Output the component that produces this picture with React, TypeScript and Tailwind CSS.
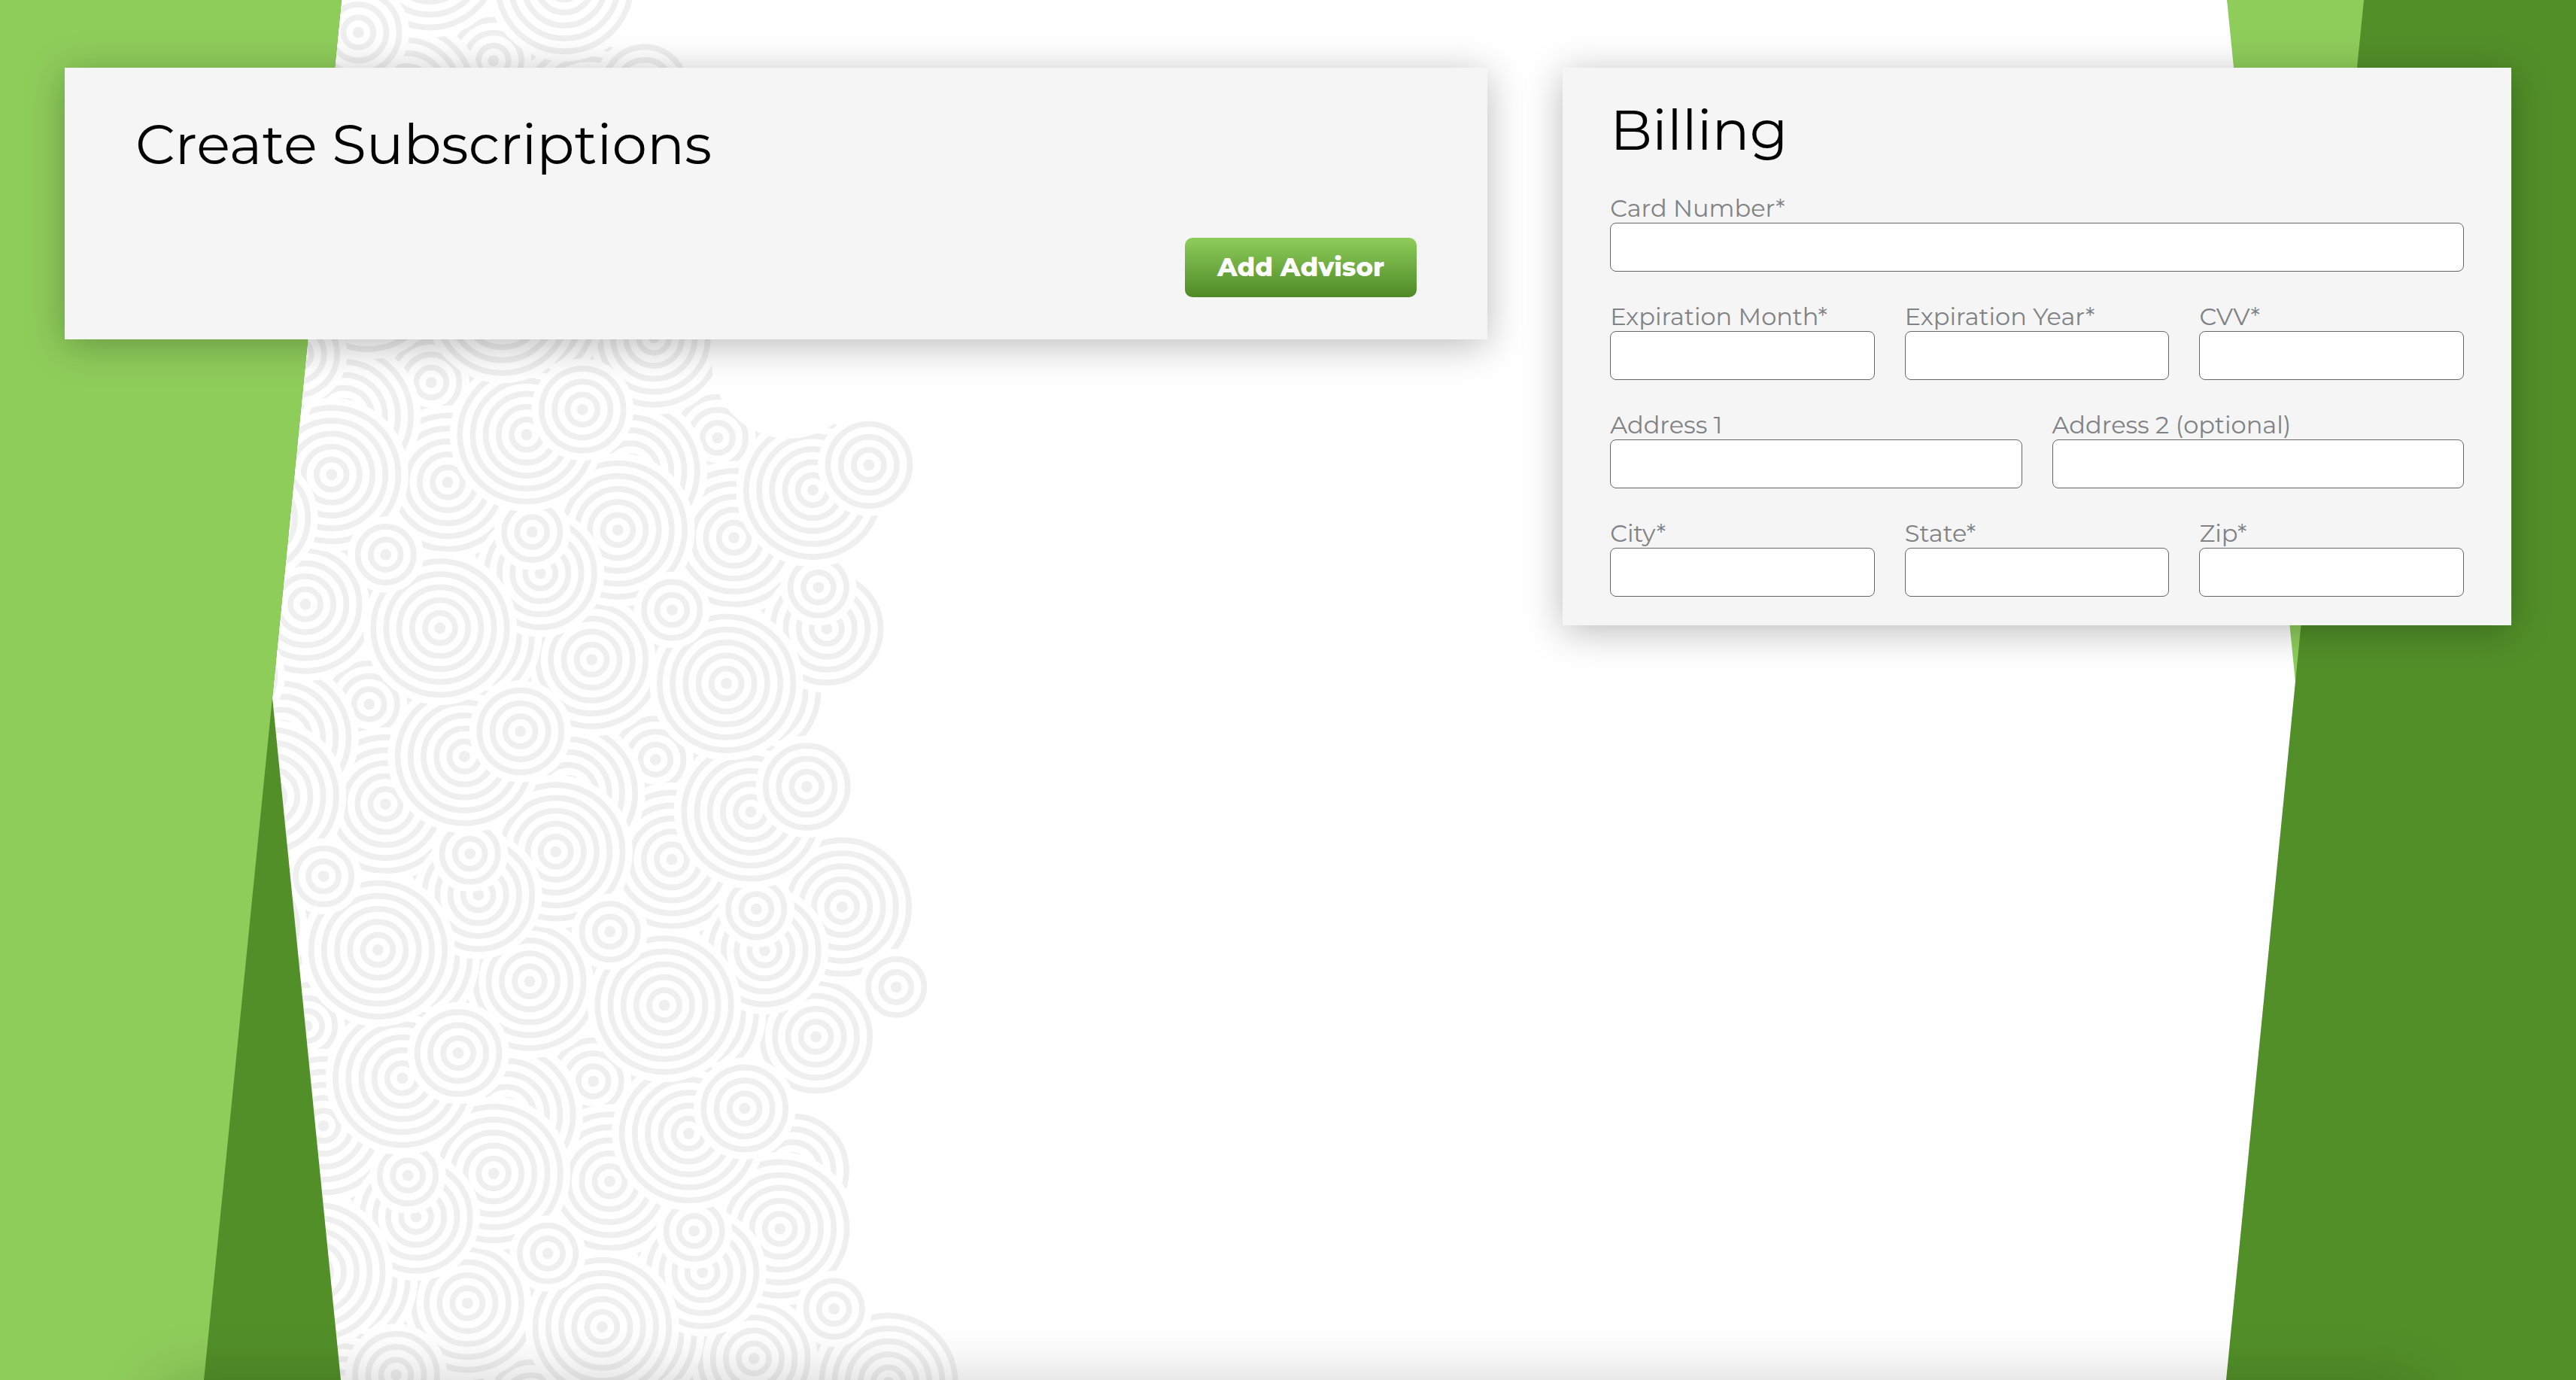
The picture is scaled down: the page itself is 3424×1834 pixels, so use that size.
import { useId } from "react";

type Point = [number, number];
type Kind = "F" | "D" | "L" | "J" | "A" | "K" | "H" | "G" | "B" | "I" | "C" | "E";

// Ring pattern: one tile of circles, repeated along two lattice directions.
const ACROSS: Point = [380.6, 73.6];
const DOWN: Point = [-82.6, 427.6];

// Listed from the bottom of the stack to the top: x, y, number of rings.
const TILE: [Kind, number, number, number][] = [
  ["F", 573.3, 508.3, 3],
  ["D", 595, 641, 5],
  ["L", 457.4, 552.7, 5],
  ["J", 406, 803, 5],
  ["A", 440.7, 630.7, 5],
  ["K", 618.3, 845.3, 5],
  ["H", 718.3, 762, 4],
  ["G", 707.3, 707, 2],
  ["B", 700, 577.7, 5],
  ["I", 585, 834.7, 5],
  ["C", 774.3, 544.3, 3],
  ["E", 512.7, 737, 2],
];

const HALO_ONLY = 0;

// Number of rings for one copy, or null where the ragged right edge leaves it out.
function ringsAt(kind: Kind, i: number, j: number, rings: number): number | null {
  if (i <= -1) return rings;
  if (i === 0) return j === -2 && kind === "K" ? null : rings;
  if (i === 1) {
    if (j >= 0) return rings;
    if (j === -1 && kind === "J") return rings;
    if (j === -1 && kind === "I") return HALO_ONLY;
    return null;
  }
  if (j === 1) {
    if (kind === "J") return 4;
    return kind === "A" || kind === "E" ? rings : null;
  }
  if (j === 2) {
    if (kind === "L") return 4;
    return kind === "A" || kind === "E" || kind === "J" || kind === "I" ? rings : null;
  }
  return null;
}

function Rings({ x, y, rings, full }: { x: number; y: number; rings: number; full: number }) {
  return (
    <g>
      <circle cx={x} cy={y} r={full * 17.2 + 16.2} fill="#fff" />
      {rings > 0 && <circle cx={x} cy={y} r={7.4} fill="#efefef" />}
      {Array.from({ length: rings }, (_, n) => (
        <circle key={n} cx={x} cy={y} r={20 + n * 17.2} fill="none" stroke="#efefef" strokeWidth={7.7} />
      ))}
    </g>
  );
}

function Backdrop() {
  const columns = [-2, -1, 0, 1, 2];
  const rows = [-2, -1, 0, 1, 2, 3, 4];
  return (
    <svg
      aria-hidden="true"
      className="absolute inset-0 h-full w-full"
      viewBox="0 0 3424 1834"
      preserveAspectRatio="none"
    >
      {TILE.map(([kind, x, y, full]) =>
        rows.map((j) =>
          columns.map((i) => {
            const rings = ringsAt(kind, i, j, full);
            if (rings === null) return null;
            return (
              <Rings
                key={`${kind}${i}${j}`}
                x={x + i * ACROSS[0] + j * DOWN[0]}
                y={y + i * ACROSS[1] + j * DOWN[1]}
                rings={rings}
                full={rings === HALO_ONLY ? full : rings}
              />
            );
          }),
        ),
      )}
      {rows.map((j) =>
        [-1, 0, 1].map((i) => {
          const x = 631 + i * ACROSS[0] + j * DOWN[0];
          const y = 737 + i * ACROSS[1] + j * DOWN[1];
          return j < 0 ? null : <path key={`${i}${j}`} d={`M${x} ${y}l7 -3l-4 9z`} fill="#efefef" />;
        }),
      )}
      <path d="M0 0H454L362 927L453 1834H0Z" fill="#528f29" />
      <path d="M0 0H454L362 927L271 1834H0Z" fill="#8fcd5b" />
      <path d="M2960 0H3424V906H3051Z" fill="#8fcd5b" />
      <path d="M3142 0H3424V1834H2959L3051 906Z" fill="#528f29" />
    </svg>
  );
}

function Field({ label, className }: { label: string; className: string }) {
  const id = useId();
  return (
    <div className={`flex flex-col ${className}`}>
      <label htmlFor={id} className="text-[32px] leading-[39px] text-[#808285]">
        {label}
      </label>
      <input
        id={id}
        type="text"
        className="h-[65px] w-full rounded-lg border border-[#666] bg-white px-4 text-[32px] text-black"
      />
    </div>
  );
}

export default function App() {
  return (
    <div className="relative min-h-screen overflow-hidden bg-white font-[Montserrat,Inter,sans-serif]">
      <Backdrop />
      <main className="relative grid grid-cols-[3fr_2fr] items-start gap-[100px] px-[86px] pt-[90px]">
        <section className="flex flex-col bg-[#f5f5f5] px-[94px] pt-[56px] pb-[56px] shadow-[0_8px_48px_rgba(0,0,0,0.27)]">
          <h1 className="text-[74px] leading-[92px] text-black">Create Subscriptions</h1>
          <button
            type="button"
            className="mt-[78px] h-[79px] self-end rounded-[10px] bg-linear-to-b from-[#8fcd5b] to-[#4f8a27] px-[43px] text-[34px] font-extrabold text-white"
          >
            Add Advisor
          </button>
        </section>

        <section className="bg-[#f5f5f5] px-[63px] pt-[37px] pb-[38px] shadow-[0_8px_48px_rgba(0,0,0,0.27)]">
          <h2 className="text-[74px] leading-[92px] text-black">Billing</h2>
          <form className="mt-[38px] grid grid-cols-6 gap-x-10 gap-y-10">
            <Field label="Card Number*" className="col-span-6" />
            <Field label="Expiration Month*" className="col-span-2" />
            <Field label="Expiration Year*" className="col-span-2" />
            <Field label="CVV*" className="col-span-2" />
            <Field label="Address 1" className="col-span-3" />
            <Field label="Address 2 (optional)" className="col-span-3" />
            <Field label="City*" className="col-span-2" />
            <Field label="State*" className="col-span-2" />
            <Field label="Zip*" className="col-span-2" />
          </form>
        </section>
      </main>
      <div
        aria-hidden="true"
        className="absolute inset-x-[212px] top-full h-40 shadow-[0_4px_80px_rgba(0,0,0,0.2)]"
      />
    </div>
  );
}
